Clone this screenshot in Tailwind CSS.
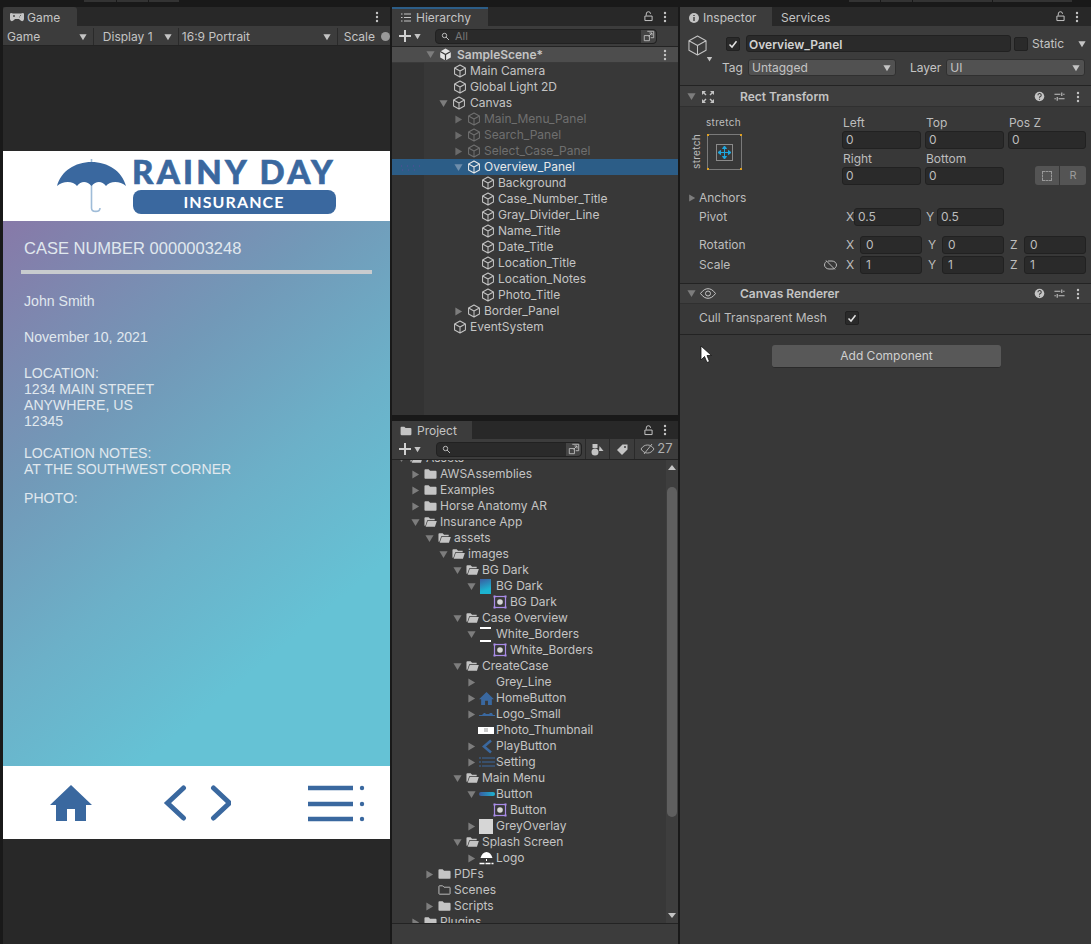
<!DOCTYPE html>
<html lang="en">
<head>
<meta charset="UTF-8">
<title>Unity Editor</title>
<script src="https://cdn.jsdelivr.net/npm/@tailwindcss/browser@4"></script>
</head>
<body class="bg-[#191919] font-['Inter',sans-serif] text-[12px] text-[#c4c4c4] overflow-hidden">
<svg class="hidden">
  <defs>
    <symbol id="cube" viewBox="0 0 16 16"><path d="M8 1.200 14.200 4.600V11.400L8 14.800 1.800 11.400V4.600ZM1.800 4.600 8 8 14.200 4.600M8 8V14.800" fill="none" stroke="currentColor" stroke-width="1.200" stroke-linejoin="round"/></symbol>
    <symbol id="cubethin" viewBox="0 0 20 22"><path d="M10 1 19 6V16L10 21 1 16V6ZM1 6 10 11 19 6M10 11V21" fill="none" stroke="currentColor" stroke-width="1.100" stroke-linejoin="round"/></symbol>
    <symbol id="down" viewBox="0 0 10 10"><path d="M0.500 1.500H9.500L5 9Z" fill="currentColor"/></symbol>
    <symbol id="right" viewBox="0 0 10 10"><path d="M1.500 0.500V9.500L9 5Z" fill="currentColor"/></symbol>
    <symbol id="kebab" viewBox="0 0 4 12"><circle cx="2" cy="2" r="1.200" fill="currentColor"/><circle cx="2" cy="6" r="1.200" fill="currentColor"/><circle cx="2" cy="10" r="1.200" fill="currentColor"/></symbol>
    <symbol id="lock" viewBox="0 0 10 12"><path d="M2.500 5V3.200A2.400 2.400 0 0 1 7.300 3M1 5.500H9V10.500H1Z" fill="none" stroke="currentColor" stroke-width="1.100"/></symbol>
    <symbol id="folder" viewBox="0 0 14 12"><path d="M0.500 2A1 1 0 0 1 1.500 1H5L6.500 2.500H12.500A1 1 0 0 1 13.500 3.500V10A1 1 0 0 1 12.500 11H1.500A1 1 0 0 1 0.500 10Z" fill="currentColor"/></symbol>
    <symbol id="folderopen" viewBox="0 0 14 12"><path d="M0.500 10V2A1 1 0 0 1 1.500 1H5L6.500 2.500H11.500V4H3.500L1.500 10ZM4 5H13.800L11.800 11H1.800Z" fill="currentColor"/></symbol>
    <symbol id="folderline" viewBox="0 0 14 12"><path d="M1 2A.6.6 0 0 1 1.600 1.500H5L6.500 3H12.400A.6.6 0 0 1 13 3.600V10A.6.6 0 0 1 12.400 10.500H1.600A.6.6 0 0 1 1 10Z" fill="none" stroke="currentColor"/></symbol>
    <symbol id="sprite" viewBox="0 0 14 14"><rect x="1.500" y="1.500" width="11" height="11" fill="none" stroke="#a98ce8" stroke-width="1.200"/><rect x="0.500" y="0.500" width="2" height="2" fill="#a98ce8"/><rect x="11.500" y="0.500" width="2" height="2" fill="#a98ce8"/><rect x="0.500" y="11.500" width="2" height="2" fill="#a98ce8"/><rect x="11.500" y="11.500" width="2" height="2" fill="#a98ce8"/><circle cx="7" cy="7" r="2.800" fill="#d6d6d6"/></symbol>
    <symbol id="maxi" viewBox="0 0 14 14"><path d="M5 1.500H12.500V9H9M1.500 6.500H7.500V12.500H1.500ZM6.500 7.500 10.500 3.500M7.500 3.500H10.500V6.500" fill="none" stroke="#c4c4c4"/></symbol>
    <symbol id="help" viewBox="0 0 12 12"><circle cx="6" cy="6" r="5.200" fill="#c4c4c4"/><path d="M4.300 4.600A1.800 1.800 0 1 1 6.600 6.300C6.100 6.600 6 6.800 6 7.400M6 8.400V9.600" fill="none" stroke="#3c3c3c" stroke-width="1.200"/></symbol>
    <symbol id="sliders" viewBox="0 0 12 12"><path d="M0.500 3.500H7M10 3.500H11.500M0.500 8.500H2M5 8.500H11.500M8.500 1.500V5.500M3.500 6.500V10.500" fill="none" stroke="#c4c4c4" stroke-width="1.200"/></symbol>
    <symbol id="check" viewBox="0 0 10 10"><path d="M1.500 5.500 4 8 8.500 2.200" fill="none" stroke="#e4e4e4" stroke-width="1.500"/></symbol>
  </defs>
</svg>

<div class="h-[7px] flex items-start">
  <div class="ml-[84px] w-[32px] h-[2px] bg-[#333]"></div>
  <div class="ml-px w-[31px] h-[2px] bg-[#333]"></div>
  <div class="ml-px w-[30px] h-[2px] bg-[#333]"></div>
  <div class="ml-[670px] w-[31px] h-[2px] bg-[#333]"></div>
  <div class="ml-px w-[31px] h-[2px] bg-[#333]"></div>
  <div class="ml-px w-[79px] h-[2px] bg-[#333]"></div>
  <div class="ml-px w-[79px] h-[2px] bg-[#333]"></div>
</div>

<div class="flex h-[937px] w-[1091px]">
  <!-- Game -->
  <section class="ml-[3px] w-[387px] flex flex-col bg-[#282828]">
    <div class="h-[19px] flex items-stretch bg-[#282828] shrink-0">
      <div class="w-[74px] bg-[#3c3c3c] rounded-t-[3px] flex items-center pl-[7px] pt-[2px] gap-[3px]">
        <svg class="w-[14px] h-[9px]" viewBox="0 0 14 9"><path d="M3 .5H11A3 3 0 0 1 13.800 6.500C13.400 8.500 11.500 8.700 10 7L9 6H5L4 7C2.500 8.700 .6 8.500 .2 6.500A3 3 0 0 1 3 .5Z" fill="#c4c4c4"/><path d="M3 3H5M4 2V4M10 2.500H10.800M9 4H9.800" stroke="#333" stroke-width=".8"/></svg>
        <span>Game</span>
      </div>
      <div class="flex-1"></div>
      <svg class="w-[4px] h-[12px] mr-[11px] self-center text-[#c4c4c4]"><use href="#kebab"/></svg>
    </div>
    <div class="h-[20px] flex bg-[#3c3c3c] gap-[2px] border-b border-[#232323] shrink-0 overflow-hidden pt-[2px]">
      <div class="w-[89px] flex items-center justify-between pl-[4px] pr-[4px]"><span>Game</span><svg class="w-[8px] h-[8px] text-[#c4c4c4]"><use href="#down"/></svg></div>
      <div class="w-[84px] flex items-center justify-between pl-[9px] pr-[4px] border-l border-[#2a2a2a]"><span>Display 1</span><svg class="w-[8px] h-[8px] text-[#c4c4c4]"><use href="#down"/></svg></div>
      <div class="w-[159px] flex items-center justify-between pl-[3px] pr-[4px] border-l border-[#2a2a2a]"><span>16:9 Portrait</span><svg class="w-[8px] h-[8px] text-[#c4c4c4]"><use href="#down"/></svg></div>
      <div class="flex items-center pl-[6px] gap-[6px] border-l border-[#2a2a2a]"><span>Scale</span><div class="w-[9px] h-[9px] rounded-full bg-[#999] shrink-0"></div></div>
    </div>
    <div class="h-[105px] shrink-0"></div>
    <!-- game view -->
    <div class="h-[70px] bg-white flex items-center shrink-0 pl-[54px]">
      <svg class="w-[70px] h-[54px] shrink-0" viewBox="0 0 70 54">
        <path d="M34.500 0V49C34.500 53.500 43 53.500 43 49" fill="none" stroke="#9fbcd8" stroke-width="1.600"/>
        <path d="M0 27C4 12 18 3 34.500 3S65 12 69 27C63 21.500 53 21.500 49 27C45 21.500 39 21.500 34.500 27C30 21.500 24 21.500 20 27C16 21.500 6 21.500 0 27Z" fill="#3a689f"/>
      </svg>
      <div class="ml-[5px] flex flex-col w-[204px] items-center">
        <div class="font-['Lato',sans-serif] font-black text-[#3a689f] text-[33px] leading-[24px] tracking-[3.200px] [-webkit-text-stroke:0.6px_#3a689f] whitespace-nowrap">RAINY DAY</div>
        <div class="mt-[7px] w-[203px] h-[24px] rounded-[8px] bg-[#3a689f] text-white font-['Lato',sans-serif] font-bold text-[16px] tracking-[1.100px] flex items-center justify-center">INSURANCE</div>
      </div>
    </div>
    <div class="h-[545px] shrink-0 pt-[16px] px-[18px] bg-[linear-gradient(140deg,#8779a8_0%,#7299b8_32%,#6cb0c8_54%,#65c2d5_76%,#65c2d5_100%)] font-['Liberation_Sans',sans-serif] text-[14.1px] leading-[16px] text-[#e0e8ee]">
      <div class="pl-[3px] text-[16.5px] leading-[22px]">CASE NUMBER 0000003248</div>
      <div class="mt-[11px] h-[4px] bg-[#c8cbce] w-[351px]"></div>
      <div class="pl-[3px] mt-[19px]">John Smith</div>
      <div class="pl-[3px] mt-[20px]">November 10, 2021</div>
      <div class="pl-[3px] mt-[20px]">LOCATION:<br>1234 MAIN STREET<br>ANYWHERE, US<br>12345</div>
      <div class="pl-[3px] mt-[16px]">LOCATION NOTES:<br>AT THE SOUTHWEST CORNER</div>
      <div class="pl-[3px] mt-[13px]">PHOTO:</div>
    </div>
    <div class="h-[73px] bg-white shrink-0 flex items-center relative pl-[47px]">
      <svg class="w-[42px] h-[36px] shrink-0" viewBox="0 0 42 36"><path d="M21 0 42 20H36V36H25V24H17V36H6V20H0Z" fill="#3a689f"/></svg>
      <svg class="ml-[69px] w-[70px] h-[38px] shrink-0" viewBox="0 0 70 38"><path d="M22.500 4 6.500 19 22.500 34M52.500 4 68.500 19 52.500 34" fill="none" stroke="#3a689f" stroke-width="5" stroke-linecap="round"/></svg>
      <svg class="ml-[75px] w-[60px] h-[38px] shrink-0" viewBox="0 0 60 38"><path d="M2 4H47M2 20H47M2 35H47" stroke="#3a689f" stroke-width="4.500"/><circle cx="56" cy="4" r="2.200" fill="#3a689f"/><circle cx="56" cy="20" r="2.200" fill="#3a689f"/><circle cx="56" cy="35" r="2.200" fill="#3a689f"/></svg>
    </div>
  </section>

  <!-- Middle column -->
  <div class="ml-[2px] w-[286px] flex flex-col">
    <section class="h-[408px] flex flex-col bg-[#383838] overflow-hidden">
      <div class="h-[19px] flex bg-[#282828] shrink-0 items-stretch">
        <div class="w-[96px] bg-[#3c3c3c] border-t-2 border-[#2c5d87] flex items-center pl-[9px] gap-[5px]">
          <svg class="w-[10px] h-[9px]" viewBox="0 0 10 9"><path d="M0 1H1.500M3 1H10M0 4.500H1.500M3 4.500H10M0 8H1.500M3 8H10" stroke="#c4c4c4"/></svg>
          <span>Hierarchy</span>
        </div>
        <div class="flex-1"></div>
        <svg class="w-[9px] h-[11px] self-center text-[#c4c4c4]"><use href="#lock"/></svg>
        <svg class="ml-[10px] mr-[11px] w-[4px] h-[12px] self-center text-[#c4c4c4]"><use href="#kebab"/></svg>
      </div>
      <div class="h-[21px] flex items-center bg-[#3c3c3c] border-b border-[#232323] shrink-0">
        <span class="ml-[7px] relative w-[12px] h-[12px] shrink-0"><span class="absolute left-0 top-[5px] w-[12px] h-[2px] bg-[#d0d0d0]"></span><span class="absolute left-[5px] top-0 h-[12px] w-[2px] bg-[#d0d0d0]"></span></span>
        <svg class="ml-[3px] w-[7px] h-[7px] text-[#c4c4c4]"><use href="#down"/></svg>
        <div class="ml-[14px] w-[222px] h-[15px] rounded-[4px] bg-[#2a2a2a] border border-[#212121] flex items-center">
          <svg class="ml-[5px] w-[9px] h-[9px]" viewBox="0 0 9 9"><circle cx="3.500" cy="3.500" r="2.200" fill="none" stroke="#bbb"/><path d="M5 5 8 8" stroke="#bbb"/></svg>
          <span class="ml-[5px] text-[#777] text-[11px]">All</span>
          <div class="flex-1"></div>
          <div class="w-[15px] h-full bg-[#444] rounded-r-[4px] flex items-center justify-center"><svg class="w-[12px] h-[12px]"><use href="#maxi"/></svg></div>
        </div>
      </div>
      <div class="h-[16px] shrink-0 flex items-center bg-[#4d4d4d] border-b border-[#3a3a3a]">
        <svg class="ml-[34px] w-[9px] h-[9px] text-[#7d7d7d]"><use href="#down"/></svg>
        <svg class="ml-[4px] w-[13px] h-[13px]" viewBox="0 0 16 16"><path d="M8 .5 14.500 4.200V11.800L8 15.500 1.500 11.800V4.200Z" fill="#e4e4e4"/><path d="M8 8V15.500M8 8 1.500 4.200M8 8 14.500 4.200" stroke="#333" stroke-width="1.500"/></svg>
        <span class="ml-[5px] font-semibold">SampleScene*</span>
        <div class="flex-1"></div>
        <svg class="w-[4px] h-[12px] mr-[11px] text-[#c4c4c4]"><use href="#kebab"/></svg>
      </div>
      <div class="flex-1 bg-[linear-gradient(90deg,#333_32px,#383838_32px)]">
        <div class="h-[16px] flex items-center pl-[61px] gap-[3px]"><svg class="w-[14px] h-[14px] text-[#c4c4c4]"><use href="#cube"/></svg><span>Main Camera</span></div>
        <div class="h-[16px] flex items-center pl-[61px] gap-[3px]"><svg class="w-[14px] h-[14px] text-[#c4c4c4]"><use href="#cube"/></svg><span>Global Light 2D</span></div>
        <div class="h-[16px] flex items-center pl-[47px] gap-[4px]"><svg class="w-[9px] h-[9px] text-[#7d7d7d]"><use href="#down"/></svg><svg class="w-[14px] h-[14px] text-[#c4c4c4]"><use href="#cube"/></svg><span>Canvas</span></div>
        <div class="h-[16px] flex items-center pl-[62px] gap-[4px] text-[#6f6f6f]"><svg class="w-[9px] h-[9px] text-[#6a6a6a]"><use href="#right"/></svg><svg class="w-[14px] h-[14px]"><use href="#cube"/></svg><span class="ml-[-1px]">Main_Menu_Panel</span></div>
        <div class="h-[16px] flex items-center pl-[62px] gap-[4px] text-[#6f6f6f]"><svg class="w-[9px] h-[9px] text-[#6a6a6a]"><use href="#right"/></svg><svg class="w-[14px] h-[14px]"><use href="#cube"/></svg><span class="ml-[-1px]">Search_Panel</span></div>
        <div class="h-[16px] flex items-center pl-[62px] gap-[4px] text-[#6f6f6f]"><svg class="w-[9px] h-[9px] text-[#6a6a6a]"><use href="#right"/></svg><svg class="w-[14px] h-[14px]"><use href="#cube"/></svg><span class="ml-[-1px]">Select_Case_Panel</span></div>
        <div class="h-[16px] flex items-center pl-[62px] gap-[4px] bg-[#2c5d87] text-[#e8e8e8] relative">
          <svg class="absolute left-[9px] top-[6px] w-[20px] h-[6px]" viewBox="0 0 20 6"><path d="M0 1H1M6 1H7M12 1H13M18 1H19M1 5H2M7 5H8M13 5H14" stroke="#5a4a9a"/></svg>
          <svg class="w-[9px] h-[9px] text-[#6f8eab]"><use href="#down"/></svg><svg class="w-[14px] h-[14px]"><use href="#cube"/></svg><span class="ml-[-1px]">Overview_Panel</span>
        </div>
        <div class="h-[16px] flex items-center pl-[89px] gap-[3px]"><svg class="w-[14px] h-[14px] text-[#c4c4c4]"><use href="#cube"/></svg><span>Background</span></div>
        <div class="h-[16px] flex items-center pl-[89px] gap-[3px]"><svg class="w-[14px] h-[14px] text-[#c4c4c4]"><use href="#cube"/></svg><span>Case_Number_Title</span></div>
        <div class="h-[16px] flex items-center pl-[89px] gap-[3px]"><svg class="w-[14px] h-[14px] text-[#c4c4c4]"><use href="#cube"/></svg><span>Gray_Divider_Line</span></div>
        <div class="h-[16px] flex items-center pl-[89px] gap-[3px]"><svg class="w-[14px] h-[14px] text-[#c4c4c4]"><use href="#cube"/></svg><span>Name_Title</span></div>
        <div class="h-[16px] flex items-center pl-[89px] gap-[3px]"><svg class="w-[14px] h-[14px] text-[#c4c4c4]"><use href="#cube"/></svg><span>Date_Title</span></div>
        <div class="h-[16px] flex items-center pl-[89px] gap-[3px]"><svg class="w-[14px] h-[14px] text-[#c4c4c4]"><use href="#cube"/></svg><span>Location_Title</span></div>
        <div class="h-[16px] flex items-center pl-[89px] gap-[3px]"><svg class="w-[14px] h-[14px] text-[#c4c4c4]"><use href="#cube"/></svg><span>Location_Notes</span></div>
        <div class="h-[16px] flex items-center pl-[89px] gap-[3px]"><svg class="w-[14px] h-[14px] text-[#c4c4c4]"><use href="#cube"/></svg><span>Photo_Title</span></div>
        <div class="h-[16px] flex items-center pl-[62px] gap-[4px]"><svg class="w-[9px] h-[9px] text-[#7d7d7d]"><use href="#right"/></svg><svg class="w-[14px] h-[14px] text-[#c4c4c4]"><use href="#cube"/></svg><span class="ml-[-1px]">Border_Panel</span></div>
        <div class="h-[16px] flex items-center pl-[61px] gap-[3px]"><svg class="w-[14px] h-[14px] text-[#c4c4c4]"><use href="#cube"/></svg><span>EventSystem</span></div>
      </div>
    </section>

    <section class="mt-[6px] h-[523px] flex flex-col bg-[#383838] overflow-hidden">
      <div class="h-[18px] flex bg-[#282828] shrink-0 items-stretch">
        <div class="w-[80px] bg-[#3c3c3c] flex items-center pl-[8px] pt-[2px] gap-[5px]">
          <svg class="w-[12px] h-[10px] text-[#c4c4c4]"><use href="#folder"/></svg>
          <span>Project</span>
        </div>
        <div class="flex-1"></div>
        <svg class="w-[9px] h-[11px] self-center text-[#c4c4c4]"><use href="#lock"/></svg>
        <svg class="ml-[10px] mr-[11px] w-[4px] h-[12px] self-center text-[#c4c4c4]"><use href="#kebab"/></svg>
      </div>
      <div class="h-[21px] flex items-center bg-[#3c3c3c] border-b border-[#232323] shrink-0 relative z-10">
        <span class="ml-[7px] relative w-[12px] h-[12px] shrink-0"><span class="absolute left-0 top-[5px] w-[12px] h-[2px] bg-[#d0d0d0]"></span><span class="absolute left-[5px] top-0 h-[12px] w-[2px] bg-[#d0d0d0]"></span></span>
        <svg class="ml-[3px] w-[7px] h-[7px] text-[#c4c4c4]"><use href="#down"/></svg>
        <div class="ml-[15px] w-[146px] h-[15px] rounded-[4px] bg-[#2a2a2a] border border-[#212121] flex items-center">
          <svg class="ml-[5px] w-[9px] h-[9px]" viewBox="0 0 9 9"><circle cx="3.500" cy="3.500" r="2.200" fill="none" stroke="#bbb"/><path d="M5 5 8 8" stroke="#bbb"/></svg>
          <div class="flex-1"></div>
          <div class="w-[15px] h-full bg-[#444] rounded-r-[4px] flex items-center justify-center"><svg class="w-[12px] h-[12px]"><use href="#maxi"/></svg></div>
        </div>
        <div class="ml-[3px] w-[25px] h-full border-l border-r border-[#2a2a2a] flex items-center justify-center"><svg class="w-[13px] h-[13px]" viewBox="0 0 13 13"><path d="M1.500 1H6.500V5H1.500Z" fill="#c4c4c4"/><circle cx="4" cy="9" r="3.500" fill="#c4c4c4"/><path d="M8.500 3 12.500 8H8Z" fill="#c4c4c4"/></svg></div>
        <div class="w-[25px] h-full border-r border-[#2a2a2a] flex items-center justify-center"><svg class="w-[12px] h-[11px]" viewBox="0 0 12 11"><path d="M6.500 .5H11.500V5.500L6 11 1 6Z" fill="#c4c4c4"/><circle cx="9" cy="3" r="1" fill="#3c3c3c"/></svg></div>
        <div class="flex-1 flex items-center justify-center gap-[2px] text-[#b0b0b0] text-[13px]"><svg class="w-[15px] h-[12px]" viewBox="0 0 15 12"><path d="M1 6C3 3 5 2 7.500 2S12 3 14 6C12 9 10 10 7.500 10S3 9 1 6ZM4 11 12 1" fill="none" stroke="#b0b0b0"/></svg><span>27</span></div>
      </div>
      <div class="flex-1 flex min-h-0 overflow-hidden">
        <div class="flex-1 min-w-0 -mt-[10px]">
          <div class="h-[16px] flex items-center pl-[5px] gap-[3px]"><svg class="w-[9px] h-[9px] text-[#7d7d7d]"><use href="#down"/></svg><svg class="ml-[1px] w-[13px] h-[12px] text-[#c4c4c4]"><use href="#folderopen"/></svg><span>Assets</span></div>
          <div class="h-[16px] flex items-center pl-[19px] gap-[3px]"><svg class="w-[9px] h-[9px] text-[#7d7d7d]"><use href="#right"/></svg><svg class="ml-[1px] w-[13px] h-[12px] text-[#c4c4c4]"><use href="#folder"/></svg><span>AWSAssemblies</span></div>
          <div class="h-[16px] flex items-center pl-[19px] gap-[3px]"><svg class="w-[9px] h-[9px] text-[#7d7d7d]"><use href="#right"/></svg><svg class="ml-[1px] w-[13px] h-[12px] text-[#c4c4c4]"><use href="#folder"/></svg><span>Examples</span></div>
          <div class="h-[16px] flex items-center pl-[19px] gap-[3px]"><svg class="w-[9px] h-[9px] text-[#7d7d7d]"><use href="#right"/></svg><svg class="ml-[1px] w-[13px] h-[12px] text-[#c4c4c4]"><use href="#folder"/></svg><span>Horse Anatomy AR</span></div>
          <div class="h-[16px] flex items-center pl-[19px] gap-[3px]"><svg class="w-[9px] h-[9px] text-[#7d7d7d]"><use href="#down"/></svg><svg class="ml-[1px] w-[13px] h-[12px] text-[#c4c4c4]"><use href="#folderopen"/></svg><span>Insurance App</span></div>
          <div class="h-[16px] flex items-center pl-[33px] gap-[3px]"><svg class="w-[9px] h-[9px] text-[#7d7d7d]"><use href="#down"/></svg><svg class="ml-[1px] w-[13px] h-[12px] text-[#c4c4c4]"><use href="#folderopen"/></svg><span>assets</span></div>
          <div class="h-[16px] flex items-center pl-[47px] gap-[3px]"><svg class="w-[9px] h-[9px] text-[#7d7d7d]"><use href="#down"/></svg><svg class="ml-[1px] w-[13px] h-[12px] text-[#c4c4c4]"><use href="#folderopen"/></svg><span>images</span></div>
          <div class="h-[16px] flex items-center pl-[61px] gap-[3px]"><svg class="w-[9px] h-[9px] text-[#7d7d7d]"><use href="#down"/></svg><svg class="ml-[1px] w-[13px] h-[12px] text-[#c4c4c4]"><use href="#folderopen"/></svg><span>BG Dark</span></div>
          <div class="h-[16px] flex items-center pl-[75px] gap-[3px]"><svg class="w-[9px] h-[9px] text-[#7d7d7d]"><use href="#down"/></svg><div class="ml-[1px] w-[11px] h-[15px] bg-[linear-gradient(160deg,#3a5a9f,#1cb3d0_70%)]"></div><span class="ml-[2px]">BG Dark</span></div>
          <div class="h-[16px] flex items-center pl-[101px] gap-[3px]"><svg class="w-[14px] h-[14px]"><use href="#sprite"/></svg><span>BG Dark</span></div>
          <div class="h-[16px] flex items-center pl-[61px] gap-[3px]"><svg class="w-[9px] h-[9px] text-[#7d7d7d]"><use href="#down"/></svg><svg class="ml-[1px] w-[13px] h-[12px] text-[#c4c4c4]"><use href="#folderopen"/></svg><span>Case Overview</span></div>
          <div class="h-[16px] flex items-center pl-[75px] gap-[3px]"><svg class="w-[9px] h-[9px] text-[#7d7d7d]"><use href="#down"/></svg><div class="ml-[1px] w-[11px] h-[15px] border-y-2 border-white"></div><span class="ml-[2px]">White_Borders</span></div>
          <div class="h-[16px] flex items-center pl-[101px] gap-[3px]"><svg class="w-[14px] h-[14px]"><use href="#sprite"/></svg><span>White_Borders</span></div>
          <div class="h-[16px] flex items-center pl-[61px] gap-[3px]"><svg class="w-[9px] h-[9px] text-[#7d7d7d]"><use href="#down"/></svg><svg class="ml-[1px] w-[13px] h-[12px] text-[#c4c4c4]"><use href="#folderopen"/></svg><span>CreateCase</span></div>
          <div class="h-[16px] flex items-center pl-[75px] gap-[3px]"><svg class="w-[9px] h-[9px] text-[#7d7d7d]"><use href="#right"/></svg><div class="ml-[1px] w-[11px] h-[15px]"></div><span class="ml-[2px]">Grey_Line</span></div>
          <div class="h-[16px] flex items-center pl-[75px] gap-[3px]"><svg class="w-[9px] h-[9px] text-[#7d7d7d]"><use href="#right"/></svg><svg class="w-[15px] h-[13px]" viewBox="0 0 42 36"><path d="M21 0 42 20H36V36H25V24H17V36H6V20H0Z" fill="#3a689f"/></svg><span class="ml-[-1px]">HomeButton</span></div>
          <div class="h-[16px] flex items-center pl-[75px] gap-[3px]"><svg class="w-[9px] h-[9px] text-[#7d7d7d]"><use href="#right"/></svg><svg class="w-[16px] h-[5px]" viewBox="0 0 16 5"><path d="M0 3H3L5 1H6L7 2H10L11 1H13L14 3H16V4H0Z" fill="#3a689f"/></svg><span class="ml-[-2px]">Logo_Small</span></div>
          <div class="h-[16px] flex items-center pl-[86px] gap-[2px]"><div class="w-[16px] h-[7px] bg-white flex items-center justify-center"><div class="w-[4px] h-[4px] bg-[#ccc]"></div></div><span>Photo_Thumbnail</span></div>
          <div class="h-[16px] flex items-center pl-[75px] gap-[3px]"><svg class="w-[9px] h-[9px] text-[#7d7d7d]"><use href="#right"/></svg><svg class="ml-[2px] w-[12px] h-[15px]" viewBox="0 0 12 15"><path d="M10 1.500 3 7.500 10 13.500" fill="none" stroke="#3a689f" stroke-width="2.600"/></svg><span>PlayButton</span></div>
          <div class="h-[16px] flex items-center pl-[75px] gap-[3px]"><svg class="w-[9px] h-[9px] text-[#7d7d7d]"><use href="#right"/></svg><svg class="w-[16px] h-[10px]" viewBox="0 0 16 10"><path d="M0 1H2M3 1H16M0 5H2M3 5H16M0 9H2M3 9H16" stroke="#3a689f" stroke-width="1.200"/></svg><span class="ml-[-2px]">Setting</span></div>
          <div class="h-[16px] flex items-center pl-[61px] gap-[3px]"><svg class="w-[9px] h-[9px] text-[#7d7d7d]"><use href="#down"/></svg><svg class="ml-[1px] w-[13px] h-[12px] text-[#c4c4c4]"><use href="#folderopen"/></svg><span>Main Menu</span></div>
          <div class="h-[16px] flex items-center pl-[75px] gap-[3px]"><svg class="w-[9px] h-[9px] text-[#7d7d7d]"><use href="#down"/></svg><div class="w-[16px] h-[4px] rounded-full bg-[linear-gradient(90deg,#3a5a9f,#1cb3d0)]"></div><span class="ml-[-2px]">Button</span></div>
          <div class="h-[16px] flex items-center pl-[101px] gap-[3px]"><svg class="w-[14px] h-[14px]"><use href="#sprite"/></svg><span>Button</span></div>
          <div class="h-[16px] flex items-center pl-[75px] gap-[3px]"><svg class="w-[9px] h-[9px] text-[#7d7d7d]"><use href="#right"/></svg><div class="w-[14px] h-[15px] bg-[#d6d6d6]"></div><span>GreyOverlay</span></div>
          <div class="h-[16px] flex items-center pl-[61px] gap-[3px]"><svg class="w-[9px] h-[9px] text-[#7d7d7d]"><use href="#down"/></svg><svg class="ml-[1px] w-[13px] h-[12px] text-[#c4c4c4]"><use href="#folderopen"/></svg><span>Splash Screen</span></div>
          <div class="h-[16px] flex items-center pl-[75px] gap-[3px]"><svg class="w-[9px] h-[9px] text-[#7d7d7d]"><use href="#right"/></svg><svg class="w-[15px] h-[14px]" viewBox="0 0 15 14"><path d="M1.500 7C2.500 3 5 1 7.500 1S12.500 3 13.500 7Z" fill="#fff"/><path d="M0.500 12.500H14.500" stroke="#fff" stroke-width="1.500" stroke-dasharray="5 1"/><path d="M7.500 8V10" stroke="#fff"/></svg><span class="ml-[-1px]">Logo</span></div>
          <div class="h-[16px] flex items-center pl-[33px] gap-[3px]"><svg class="w-[9px] h-[9px] text-[#7d7d7d]"><use href="#right"/></svg><svg class="ml-[1px] w-[13px] h-[12px] text-[#c4c4c4]"><use href="#folder"/></svg><span>PDFs</span></div>
          <div class="h-[16px] flex items-center pl-[46px] gap-[3px]"><svg class="w-[13px] h-[12px] text-[#c4c4c4]"><use href="#folderline"/></svg><span>Scenes</span></div>
          <div class="h-[16px] flex items-center pl-[33px] gap-[3px]"><svg class="w-[9px] h-[9px] text-[#7d7d7d]"><use href="#right"/></svg><svg class="ml-[1px] w-[13px] h-[12px] text-[#c4c4c4]"><use href="#folder"/></svg><span>Scripts</span></div>
          <div class="h-[16px] flex items-center pl-[19px] gap-[3px]"><svg class="w-[9px] h-[9px] text-[#7d7d7d]"><use href="#right"/></svg><svg class="ml-[1px] w-[13px] h-[12px] text-[#c4c4c4]"><use href="#folder"/></svg><span>Plugins</span></div>
        </div>
        <div class="w-[12px] shrink-0 bg-[#3e3e3e] flex flex-col items-center pt-[5px] pb-[5px]">
          <div class="w-0 h-0 border-x-[4px] border-x-transparent border-b-[5px] border-b-[#c4c4c4]"></div>
          <div class="mt-[17px] w-[10px] h-[330px] rounded-full bg-[#5f5f5f]"></div>
          <div class="mt-auto w-0 h-0 border-x-[4px] border-x-transparent border-t-[5px] border-t-[#c4c4c4]"></div>
        </div>
      </div>
      <div class="h-[21px] shrink-0 bg-[#3c3c3c] border-t border-[#232323]"></div>
    </section>
  </div>

  <!-- Inspector -->
  <section class="ml-[2px] w-[411px] flex flex-col bg-[#383838] relative">
    <div class="h-[19px] flex bg-[#282828] shrink-0 items-stretch">
      <div class="w-[92px] bg-[#3c3c3c] flex items-center pl-[9px] pt-[2px] gap-[4px]">
        <svg class="w-[10px] h-[10px]" viewBox="0 0 10 10"><circle cx="5" cy="5" r="5" fill="#c4c4c4"/><path d="M5 4V8M5 2V3" stroke="#3c3c3c" stroke-width="1.400"/></svg>
        <span>Inspector</span>
      </div>
      <span class="ml-[9px] self-center pt-[2px]">Services</span>
      <div class="flex-1"></div>
      <svg class="w-[9px] h-[11px] self-center text-[#c4c4c4]"><use href="#lock"/></svg>
      <svg class="ml-[10px] mr-[12px] w-[4px] h-[12px] self-center text-[#c4c4c4]"><use href="#kebab"/></svg>
    </div>
    <div class="h-[60px] bg-[#3c3c3c] border-b border-[#232323] shrink-0 relative">
      <div class="flex items-center h-[17px] relative top-[9px]">
        <svg class="ml-[8px] w-[19px] h-[21px] text-[#c4c4c4] mt-[4px]"><use href="#cubethin"/></svg>
        <div class="ml-[19px] w-[14px] h-[14px] rounded-[2px] bg-[#2a2a2a] border border-[#212121] flex items-center justify-center"><svg class="w-[10px] h-[10px]"><use href="#check"/></svg></div>
        <div class="ml-[6px] w-[265px] h-[17px] rounded-[3px] bg-[#2a2a2a] border border-[#212121] pl-[2px] pt-[2px] flex items-center font-semibold text-[#d2d2d2]">Overview_Panel</div>
        <div class="ml-[3px] w-[14px] h-[14px] rounded-[2px] bg-[#2a2a2a] border border-[#212121]"></div>
        <span class="ml-[4px] pt-px">Static</span>
        <svg class="ml-[14px] w-[8px] h-[8px] text-[#c4c4c4]"><use href="#down"/></svg>
      </div>
      <div class="flex items-center h-[17px] mt-[7px] relative top-[9px]">
        <svg class="ml-[26px] w-[7px] h-[6px] text-[#c4c4c4] mt-[-18px]" viewBox="0 0 10 10"><use href="#down"/></svg>
        <span class="ml-[9px]">Tag</span>
        <div class="ml-[5px] w-[148px] h-[17px] rounded-[3px] bg-[#515151] border border-[#303030] pl-[3px] pr-[4px] flex items-center justify-between"><span>Untagged</span><svg class="w-[8px] h-[8px] text-[#c4c4c4]"><use href="#down"/></svg></div>
        <span class="ml-[14px]">Layer</span>
        <div class="ml-[5px] w-[139px] h-[17px] rounded-[3px] bg-[#515151] border border-[#303030] pl-[3px] pr-[4px] flex items-center justify-between"><span>UI</span><svg class="w-[8px] h-[8px] text-[#c4c4c4]"><use href="#down"/></svg></div>
      </div>
    </div>
    <!-- rect transform -->
    <div class="h-[21px] bg-[#3e3e3e] border-b border-[#303030] shrink-0 flex items-center pt-px">
      <svg class="ml-[7px] w-[9px] h-[9px] text-[#7d7d7d]"><use href="#down"/></svg>
      <svg class="ml-[6px] w-[12px] h-[12px]" viewBox="0 0 12 12"><path d="M0 0H4L2.500 1.500 4.500 3.500 3.500 4.500 1.500 2.500 0 4ZM12 0V4L10.500 2.500 8.500 4.500 7.500 3.500 9.500 1.500 8 0ZM0 12V8L1.500 9.500 3.500 7.500 4.500 8.500 2.500 10.500 4 12ZM12 12H8L9.500 10.500 7.500 8.500 8.500 7.500 10.500 9.500 12 8Z" fill="#c4c4c4"/></svg>
      <span class="ml-[26px] font-semibold">Rect Transform</span>
      <div class="flex-1"></div>
      <svg class="w-[11px] h-[11px]"><use href="#help"/></svg>
      <svg class="ml-[9px] w-[11px] h-[11px]"><use href="#sliders"/></svg>
      <svg class="ml-[11px] mr-[11px] w-[4px] h-[12px] text-[#c4c4c4]"><use href="#kebab"/></svg>
    </div>
    <div class="h-[176px] shrink-0 flex flex-col text-[#bdbdbd]">
      <div class="h-[80px] flex shrink-0">
        <div class="w-[163px] relative shrink-0">
          <span class="absolute left-[26px] top-[8px] text-[10px] tracking-[.3px]">stretch</span>
          <span class="absolute left-[-1px] top-[37px] text-[10px] tracking-[.3px] -rotate-90">stretch</span>
          <div class="absolute left-[27px] top-[27px] w-[35px] h-[36px] border border-[#7a7a7a]">
            <div class="absolute left-[-1px] top-[-1px] w-[2px] h-[2px] bg-[#e0a020]"></div>
            <div class="absolute right-[-1px] top-[-1px] w-[2px] h-[2px] bg-[#e0a020]"></div>
            <div class="absolute left-[-1px] bottom-[-1px] w-[2px] h-[2px] bg-[#e0a020]"></div>
            <div class="absolute right-[-1px] bottom-[-1px] w-[2px] h-[2px] bg-[#e0a020]"></div>
            <div class="absolute left-[8px] top-[9px] w-[17px] h-[17px] border border-[#8a8a8a]"></div>
            <svg class="absolute left-[9px] top-[10px] w-[15px] h-[15px]" viewBox="0 0 15 15"><path d="M7.500 1V14M1 7.500H14M7.500 1 5.500 3.500H9.500ZM7.500 14 5.500 11.500H9.500ZM1 7.500 3.500 5.500V9.500ZM14 7.500 11.500 5.500V9.500Z" fill="#1ea7e0" stroke="#1ea7e0"/></svg>
          </div>
        </div>
        <div class="flex-1 pt-[9px] grid grid-cols-[79px_79px_78px] gap-x-[4px] auto-rows-[36px] ml-[-1px]">
          <div class="flex flex-col"><span class="h-[15px] leading-[13px] pl-px">Left</span><div class="h-[18px] rounded-[3px] bg-[#2a2a2a] border border-[#212121] pl-[3px] flex items-center">0</div></div>
          <div class="flex flex-col"><span class="h-[15px] leading-[13px] pl-px">Top</span><div class="h-[18px] rounded-[3px] bg-[#2a2a2a] border border-[#212121] pl-[3px] flex items-center">0</div></div>
          <div class="flex flex-col"><span class="h-[15px] leading-[13px] pl-px">Pos Z</span><div class="h-[18px] rounded-[3px] bg-[#2a2a2a] border border-[#212121] pl-[3px] flex items-center">0</div></div>
          <div class="flex flex-col"><span class="h-[15px] leading-[13px] pl-px">Right</span><div class="h-[18px] rounded-[3px] bg-[#2a2a2a] border border-[#212121] pl-[3px] flex items-center">0</div></div>
          <div class="flex flex-col"><span class="h-[15px] leading-[13px] pl-px">Bottom</span><div class="h-[18px] rounded-[3px] bg-[#2a2a2a] border border-[#212121] pl-[3px] flex items-center">0</div></div>
          <div class="flex items-start justify-end pt-[14px]">
            <div class="w-[24px] h-[19px] rounded-l-[3px] bg-[#545454] flex items-center justify-center"><div class="w-[10px] h-[10px] border border-dashed border-[#999]"></div></div>
            <div class="ml-px w-[26px] h-[19px] rounded-r-[3px] bg-[#545454] flex items-center justify-center text-[#999] text-[11px]">R</div>
          </div>
        </div>
      </div>
      <div class="h-[15px] shrink-0 mt-[3px] flex items-center"><svg class="ml-[8px] w-[8px] h-[8px] text-[#7d7d7d]"><use href="#right"/></svg><span class="ml-[3px]">Anchors</span></div>
      <div class="h-[20px] shrink-0 mt-[2px] flex items-center">
        <span class="ml-[19px] w-[147px]">Pivot</span>
        <span class="w-[8px]">X</span><div class="w-[67px] h-[18px] rounded-[3px] bg-[#2a2a2a] border border-[#212121] pl-[3px] flex items-center">0.5</div>
        <span class="ml-[5px] w-[11px]">Y</span><div class="w-[67px] h-[18px] rounded-[3px] bg-[#2a2a2a] border border-[#212121] pl-[3px] flex items-center">0.5</div>
      </div>
      <div class="h-[20px] shrink-0 mt-[8px] flex items-center">
        <span class="ml-[19px] w-[147px]">Rotation</span>
        <span class="w-[14px]">X</span><div class="w-[62px] h-[18px] rounded-[3px] bg-[#2a2a2a] border border-[#212121] pl-[5px] flex items-center">0</div>
        <span class="ml-[6px] w-[14px]">Y</span><div class="w-[62px] h-[18px] rounded-[3px] bg-[#2a2a2a] border border-[#212121] pl-[5px] flex items-center">0</div>
        <span class="ml-[6px] w-[14px]">Z</span><div class="w-[62px] h-[18px] rounded-[3px] bg-[#2a2a2a] border border-[#212121] pl-[5px] flex items-center">0</div>
      </div>
      <div class="h-[20px] shrink-0 flex items-center">
        <span class="ml-[19px] w-[125px]">Scale</span>
        <svg class="w-[13px] h-[10px] mr-[9px]" viewBox="0 0 13 10"><path d="M4 1H8C10.500 1 12.500 3 12.500 5S10.500 9 9 9M9 9H5C2.500 9 .5 7 .5 5S2 1.500 3 1M2 .5 11 9.500" fill="none" stroke="#bbb"/></svg>
        <span class="w-[14px]">X</span><div class="w-[62px] h-[18px] rounded-[3px] bg-[#2a2a2a] border border-[#212121] pl-[5px] flex items-center">1</div>
        <span class="ml-[6px] w-[14px]">Y</span><div class="w-[62px] h-[18px] rounded-[3px] bg-[#2a2a2a] border border-[#212121] pl-[5px] flex items-center">1</div>
        <span class="ml-[6px] w-[14px]">Z</span><div class="w-[62px] h-[18px] rounded-[3px] bg-[#2a2a2a] border border-[#212121] pl-[5px] flex items-center">1</div>
      </div>
    </div>
    <!-- canvas renderer -->
    <div class="h-[21px] bg-[#3e3e3e] border-y border-y-[#232323] border-b-[#303030] shrink-0 flex items-center">
      <svg class="ml-[7px] w-[9px] h-[9px] text-[#7d7d7d]"><use href="#down"/></svg>
      <svg class="ml-[4px] w-[16px] h-[11px]" viewBox="0 0 16 11"><path d="M.5 5.500C3 2 5.500 .7 8 .7S13 2 15.500 5.500C13 9 10.500 10.300 8 10.300S3 9 .5 5.500Z" fill="none" stroke="#c4c4c4"/><circle cx="8" cy="5.500" r="2.500" fill="none" stroke="#c4c4c4"/></svg>
      <span class="ml-[24px] font-semibold">Canvas Renderer</span>
      <div class="flex-1"></div>
      <svg class="w-[11px] h-[11px]"><use href="#help"/></svg>
      <svg class="ml-[9px] w-[11px] h-[11px]"><use href="#sliders"/></svg>
      <svg class="ml-[11px] mr-[11px] w-[4px] h-[12px] text-[#c4c4c4]"><use href="#kebab"/></svg>
    </div>
    <div class="h-[31px] border-b border-[#232323] shrink-0 flex items-center text-[#bdbdbd] pb-[2px]">
      <span class="ml-[19px] w-[146px]">Cull Transparent Mesh</span>
      <div class="w-[14px] h-[14px] rounded-[2px] bg-[#2a2a2a] border border-[#212121] flex items-center justify-center"><svg class="w-[10px] h-[10px]"><use href="#check"/></svg></div>
    </div>
    <div class="pt-[10px] pl-[92px]">
      <div class="w-[229px] h-[23px] rounded-[3px] bg-[#585858] border-b border-[#2a2a2a] flex items-center justify-center text-[#d0d0d0]">Add Component</div>
    </div>
    <svg class="absolute left-[20px] top-[338px] w-[12px] h-[19px]" viewBox="0 0 12 19"><path d="M1 1V15L4.500 11.500 7 17.500 9.500 16.500 7 10.500H11.500Z" fill="#fff" stroke="#111" stroke-width=".8"/></svg>
  </section>
</div>
</body>
</html>
